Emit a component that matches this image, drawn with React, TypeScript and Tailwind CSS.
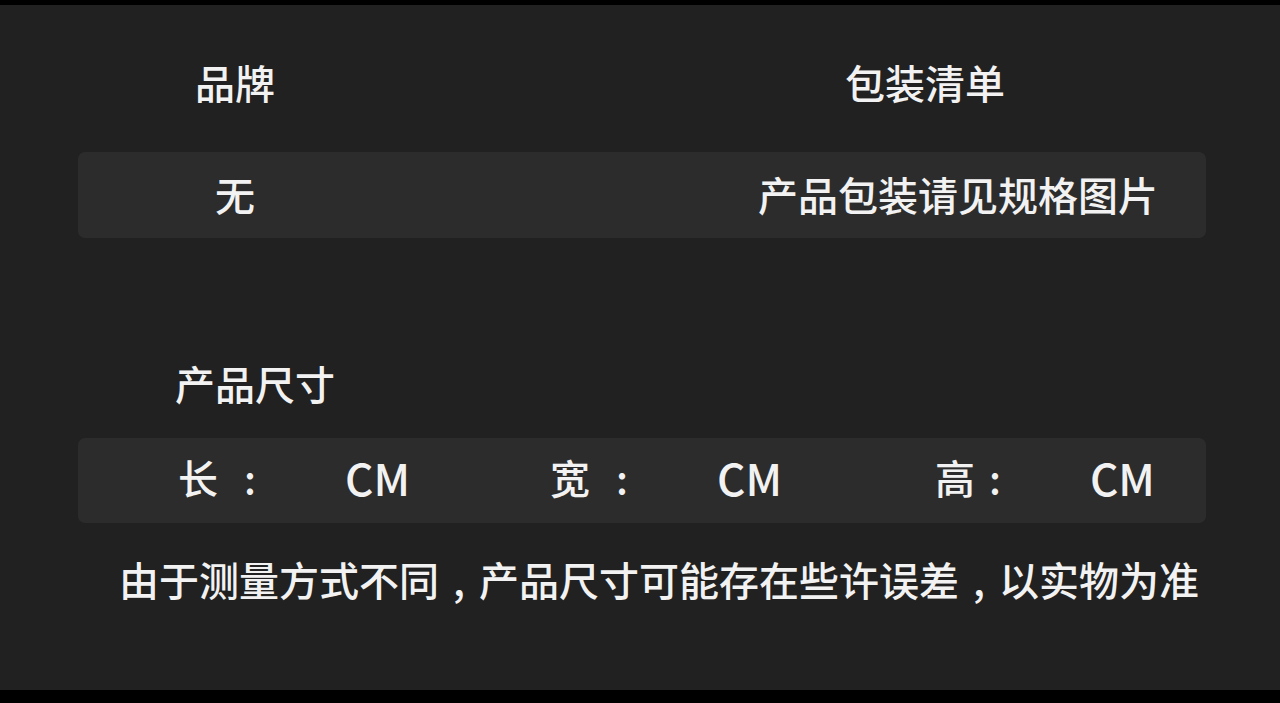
import React from "react";

const font = { fontFamily: '"Noto Sans CJK SC", "Noto Sans", sans-serif' };

export default function App() {
  return (
    <div className="w-[1280px] h-[703px] bg-black flex flex-col overflow-hidden" style={font}>
      <div className="h-[5px] shrink-0 bg-black" />
      <div className="h-[685px] shrink-0 bg-[#212121] text-[#f2f2f2] font-medium flex flex-col">
        <div className="flex items-center pt-[57px] pl-[195px] text-[40px] leading-[40px]">
          <span className="w-[650px]">品牌</span>
          <span>包装清单</span>
        </div>
        <div className="ml-[78px] w-[1128px] mt-[50px] h-[86px] pb-[2px] rounded-[7px] bg-[#2c2c2c] flex items-center text-[40px] leading-[40px]">
          <span className="ml-[137px] w-[543px]">无</span>
          <span>产品包装请见规格图片</span>
        </div>
        <div className="pl-[175px] mt-[125px] text-[40px] leading-[40px]">产品尺寸</div>
        <div className="ml-[78px] w-[1128px] mt-[35px] h-[85px] pb-[8px] rounded-[7px] bg-[#2c2c2c] flex items-center text-[40px] leading-[40px]">
          <span className="ml-[100px] w-[40px]">长</span>
          <span className="ml-[24px] w-[16px] text-center">:</span>
          <span className="ml-[87px] text-[44px]">CM</span>
          <span className="ml-[140px] w-[40px]">宽</span>
          <span className="ml-[24px] w-[16px] text-center">:</span>
          <span className="ml-[87px] text-[44px]">CM</span>
          <span className="ml-[153px] w-[40px]">高</span>
          <span className="ml-[12px] w-[16px] text-center">:</span>
          <span className="ml-[87px] text-[44px]">CM</span>
        </div>
        <div className="pl-[119px] mt-[36px] text-[40px] leading-[40px] whitespace-nowrap flex">
          <span>由于测量方式不同</span>
          <span className="w-[40px] text-center">,</span>
          <span>产品尺寸可能存在些许误差</span>
          <span className="w-[40px] text-center">,</span>
          <span>以实物为准</span>
        </div>
      </div>
      <div className="flex-1 bg-black" />
    </div>
  );
}
